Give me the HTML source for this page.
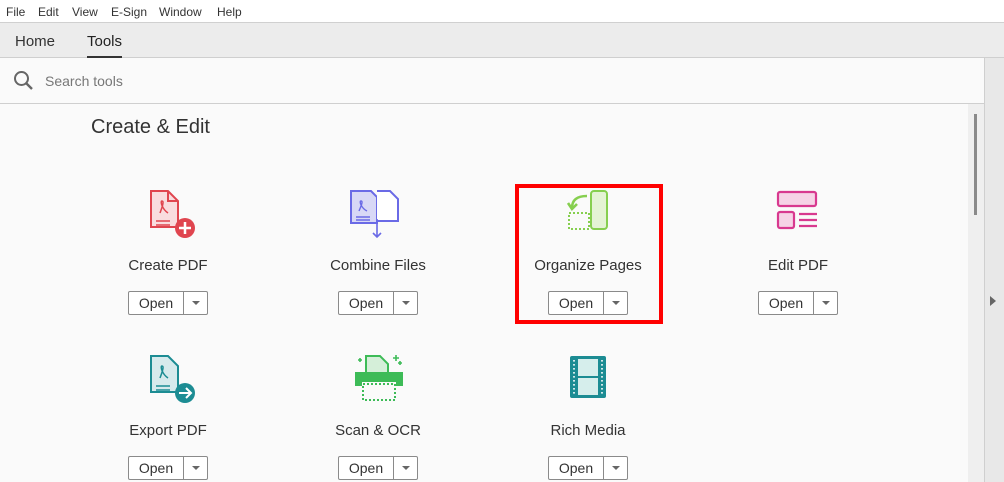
<!DOCTYPE html><html><head><style>
body{margin:0;width:1004px;height:482px;overflow:hidden;background:#fafafa;font-family:"Liberation Sans",sans-serif;position:relative;color:#333}
.abs{position:absolute}
.menu{top:0;left:0;width:1004px;height:22px;background:#fff;font-size:12px}
.menu span{position:absolute;top:5px}
.tabs{top:22px;left:0;width:1004px;height:36px;background:#ececec;border-top:1px solid #d0d0d0;border-bottom:1px solid #cfcfcf;box-sizing:border-box}
.search{top:58px;left:0;width:984px;height:46px;background:#fafafa;border-bottom:1px solid #cfcfcf;box-sizing:border-box}
.lbl{font-size:15px;color:#333;width:200px;text-align:center}
.btn{width:78px;height:22px;border:1px solid #8a8a8a;background:#fff;border-radius:2px;font-size:14px}
.btn .o{position:absolute;left:0;top:3px;width:54px;text-align:center}
.btn .d{position:absolute;left:54px;top:0;height:22px;border-left:1px solid #8a8a8a;width:24px}
.btn .d:after{content:"";position:absolute;left:8px;top:9px;border-left:4px solid transparent;border-right:4px solid transparent;border-top:4px solid #666}
</style></head><body>
<div class="abs menu"><span style="left:6px">File</span><span style="left:38px">Edit</span><span style="left:72px">View</span><span style="left:111px">E-Sign</span><span style="left:159px">Window</span><span style="left:217px">Help</span></div>
<div class="abs tabs"><span class="abs" style="left:15px;top:10px;font-size:15px">Home</span><span class="abs" style="left:87px;top:10px;font-size:15px;color:#222">Tools</span><div class="abs" style="left:87px;top:33px;width:35px;height:2px;background:#333"></div></div>
<div class="abs search"><svg class="abs" style="left:13px;top:12px" width="22" height="22" viewBox="0 0 22 22"><circle cx="8.5" cy="8.5" r="6.5" fill="none" stroke="#666" stroke-width="2"/><path d="M13 13l6 6" stroke="#666" stroke-width="2.4"/></svg><span class="abs" style="left:45px;top:15px;font-size:14px;color:#777">Search tools</span></div>
<div class="abs" style="left:968px;top:104px;width:16px;height:378px;background:#efefef"></div>
<div class="abs" style="left:974px;top:114px;width:3px;height:101px;background:#8a8a8a"></div>
<div class="abs" style="left:984px;top:58px;width:20px;height:424px;background:#e8e8e8;border-left:1px solid #cfcfcf"></div>
<div class="abs" style="left:990px;top:296px;border-top:5px solid transparent;border-bottom:5px solid transparent;border-left:6px solid #666"></div>
<div class="abs" style="left:91px;top:116px;font-size:20px;color:#333">Create &amp; Edit</div>

<svg class="abs" style="left:148px;top:189px" width="50" height="50" viewBox="0 0 50 50"><path d="M3 2h17l10 10v26H3z" fill="#f9dcde" stroke="#e0454f" stroke-width="2"/><path d="M20 2v10h10" fill="none" stroke="#e0454f" stroke-width="2"/><path d="M8 32h14M8 36h14M12 24c3-8 4-12 2-12s0 8 6 12" fill="none" stroke="#e0454f" stroke-width="1.5"/><circle cx="37" cy="39" r="10" fill="#e0454f"/><path d="M37 33v12M31 39h12" stroke="#fff" stroke-width="2.5"/></svg>
<svg class="abs" style="left:348px;top:189px" width="60" height="50" viewBox="0 0 60 50"><path d="M3 2h20l6 6v26H3z" fill="#d8d8f6" stroke="#6a6ae6" stroke-width="2"/><path d="M29 2h13l8 8v22H29" fill="#fff" stroke="#6a6ae6" stroke-width="2"/><path d="M29 30v18M25 44l4 4 4-4M8 28h14M8 31h14" fill="none" stroke="#6a6ae6" stroke-width="1.6"/><path d="M11 22c3-7 4-10 2-10s0 7 6 10" fill="none" stroke="#6a6ae6" stroke-width="1.4"/></svg>
<svg class="abs" style="left:562px;top:189px" width="52" height="44" viewBox="0 0 52 44"><rect x="29" y="2" width="16" height="38" rx="3" fill="#e4f3d4" stroke="#86cf4f" stroke-width="2"/><rect x="7" y="24" width="20" height="16" fill="none" stroke="#86cf4f" stroke-width="2" stroke-dasharray="2 2"/><path d="M25 7c-10 0-15 4-15 12M6 14l4 6 5-5" fill="none" stroke="#86cf4f" stroke-width="2.6"/></svg>
<svg class="abs" style="left:776px;top:190px" width="44" height="42" viewBox="0 0 44 42"><rect x="2" y="2" width="38" height="14" rx="2" fill="#f6d3e6" stroke="#d8398f" stroke-width="2.2"/><rect x="2" y="22" width="16" height="16" rx="2" fill="#f6d3e6" stroke="#d8398f" stroke-width="2.2"/><path d="M23 24h18M23 30h18M23 36h18" stroke="#d8398f" stroke-width="2.2"/></svg>
<svg class="abs" style="left:148px;top:354px" width="50" height="50" viewBox="0 0 50 50"><path d="M3 2h17l10 10v26H3z" fill="#d6eaec" stroke="#1c8c93" stroke-width="2"/><path d="M8 32h14M8 36h14M12 24c3-8 4-12 2-12s0 8 6 12" fill="none" stroke="#1c8c93" stroke-width="1.5"/><circle cx="37" cy="39" r="10" fill="#1c8c93"/><path d="M31 39h11M38 34l5 5-5 5" fill="none" stroke="#fff" stroke-width="2"/></svg>
<svg class="abs" style="left:352px;top:352px" width="54" height="52" viewBox="0 0 54 52"><path d="M14 4h14l8 8v16H14z" fill="#d5efd9" stroke="#3dbb57" stroke-width="2"/><path d="M3 20h48v14H3z" fill="#3dbb57"/><rect x="10" y="30" width="34" height="18" fill="#fafafa"/><rect x="11" y="32" width="32" height="16" fill="none" stroke="#3dbb57" stroke-width="2" stroke-dasharray="2 2"/><path d="M6 8h4M8 6v4M41 6h6M44 3v6M46 11h4M48 9v4" stroke="#3dbb57" stroke-width="1.6"/></svg>
<svg class="abs" style="left:568px;top:354px" width="40" height="46" viewBox="0 0 40 46"><rect x="2" y="2" width="36" height="42" rx="2" fill="#1c8c93"/><rect x="10" y="5" width="20" height="17" fill="#d6eeec"/><rect x="10" y="24" width="20" height="17" fill="#d6eeec"/><path d="M6 6v34M34 6v34" stroke="#fff" stroke-width="1.6" stroke-dasharray="1.6 2.4"/></svg>

<div class="abs lbl" style="left:68px;top:257px">Create PDF</div>
<div class="abs lbl" style="left:278px;top:257px">Combine Files</div>
<div class="abs lbl" style="left:488px;top:257px">Organize Pages</div>
<div class="abs lbl" style="left:698px;top:257px">Edit PDF</div>
<div class="abs lbl" style="left:68px;top:422px">Export PDF</div>
<div class="abs lbl" style="left:278px;top:422px">Scan &amp; OCR</div>
<div class="abs lbl" style="left:488px;top:422px">Rich Media</div>

<div class="abs btn" style="left:128px;top:291px"><span class="o">Open</span><span class="d"></span></div>
<div class="abs btn" style="left:338px;top:291px"><span class="o">Open</span><span class="d"></span></div>
<div class="abs btn" style="left:548px;top:291px"><span class="o">Open</span><span class="d"></span></div>
<div class="abs btn" style="left:758px;top:291px"><span class="o">Open</span><span class="d"></span></div>
<div class="abs btn" style="left:128px;top:456px"><span class="o">Open</span><span class="d"></span></div>
<div class="abs btn" style="left:338px;top:456px"><span class="o">Open</span><span class="d"></span></div>
<div class="abs btn" style="left:548px;top:456px"><span class="o">Open</span><span class="d"></span></div>

<div class="abs" style="left:515px;top:184px;width:140px;height:132px;border:4px solid #f00"></div>
</body></html>
